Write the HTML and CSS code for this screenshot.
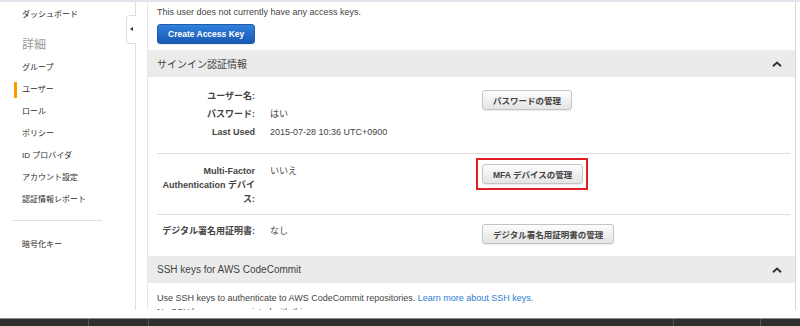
FILE: index.html
```html
<!DOCTYPE html>
<html lang="ja">
<head>
    <meta charset="UTF-8">
    <title>IAM ユーザー</title>
    <link rel="stylesheet" href="styles.css">
</head>
<body>

    <div class="window">
        <!-- Left navigation -->
        <nav class="sidebar">
            <a class="nav-item">ダッシュボード</a>
            <div class="nav-heading">詳細</div>
            <a class="nav-item">グループ</a>
            <a class="nav-item active">ユーザー</a>
            <a class="nav-item">ロール</a>
            <a class="nav-item">ポリシー</a>
            <a class="nav-item">ID プロバイダ</a>
            <a class="nav-item">アカウント設定</a>
            <a class="nav-item">認証情報レポート</a>
            <hr class="nav-divider">
            <a class="nav-item">暗号化キー</a>

            <div class="sidebar-toggle"><span class="toggle-arrow"></span></div>
        </nav>

        <main class="content">
            <div class="access-keys">
                <p>This user does not currently have any access keys.</p>
                <button class="btn btn-primary">Create Access Key</button>
            </div>

            <section class="panel">
                <div class="panel-header">
                    <span>サインイン認証情報</span>
                    <svg class="chevron" width="10" height="6" viewBox="0 0 10 6"><polyline points="1,5.2 5,1.5 9,5.2" fill="none" stroke="#333" stroke-width="2"/></svg>
                </div>
                <div class="panel-body">
                    <div class="cred-group">
                        <div class="cred-label">ユーザー名:</div>
                        <div class="cred-value"></div>
                        <div class="cred-action first"><button class="btn">パスワードの管理</button></div>
                        <div class="cred-label">パスワード:</div>
                        <div class="cred-value">はい</div>
                        <div class="cred-label">Last Used</div>
                        <div class="cred-value">2015-07-28 10:36 UTC+0900</div>
                    </div>

                    <div class="cred-group mfa">
                        <div class="cred-label">Multi-Factor Authentication デバイス:</div>
                        <div class="cred-value">いいえ</div>
                        <div class="cred-action">
                            <span class="highlight-box"><button class="btn">MFA デバイスの管理</button></span>
                        </div>
                    </div>

                    <div class="cred-group last">
                        <div class="cred-label">デジタル署名用証明書:</div>
                        <div class="cred-value">なし</div>
                        <div class="cred-action"><button class="btn">デジタル署名用証明書の管理</button></div>
                    </div>
                </div>
            </section>

            <section class="panel">
                <div class="panel-header">
                    <span>SSH keys for AWS CodeCommit</span>
                    <svg class="chevron" width="10" height="6" viewBox="0 0 10 6"><polyline points="1,5.2 5,1.5 9,5.2" fill="none" stroke="#333" stroke-width="2"/></svg>
                </div>
                <div class="ssh-body">
                    <p>Use SSH keys to authenticate to AWS CodeCommit repositories. <a href="#">Learn more about SSH keys.</a></p>
                    <p>No SSH keys are associated with this user.</p>
                </div>
            </section>
        </main>
    </div>

    <!-- taskbar strip at the bottom of the capture -->
    <div class="taskbar">
        <span style="width: 88px"></span>
        <span style="width: 59px"></span>
        <span style="width: 524px"></span>
        <span style="width: 86px"></span>
    </div>

</body>
</html>
```

FILE: styles.css
```css
body {
    margin: 0;
    font-family: "Liberation Sans", "Noto Sans CJK JP", sans-serif;
    font-size: 9px;
    color: #444;
    background-color: #fff;
    border-top: 2px solid #e2e6ec;
}
.window {
    display: flex;
    height: 308px;
    margin-bottom: 8px;
    overflow: hidden;
}

/* sidebar */
.sidebar {
    position: relative;
    display: flex;
    flex-direction: column;
    align-items: flex-start;
    width: 135px;
    flex-shrink: 0;
    padding-top: 2px;
    border-right: 1px solid #ddd;
}
.nav-item {
    display: block;
    margin: 3px 0 3px 14px;
    padding-left: 5px;
    border-left: 3px solid transparent;
    line-height: 16px;
    font-size: 8px;
    color: #2b2b2b;
    cursor: pointer;
}
.nav-item.active {
    border-left-color: #f90;
}
.nav-heading {
    margin: 7px 0 0 22px;
    line-height: 24px;
    font-size: 12px;
    color: #999;
}
.nav-divider {
    align-self: stretch;
    margin: 9px 33px 13px 13px;
    border: none;
    border-top: 1px solid #e2e2e2;
}
.sidebar-toggle {
    position: absolute;
    top: 13px;
    right: -1px;
    width: 9px;
    height: 27px;
    background-color: #fff;
    border: 1px solid #ddd;
    border-right: none;
    border-radius: 4px 0 0 4px;
}
.toggle-arrow {
    position: absolute;
    top: 11px;
    left: 3px;
    border-top: 2.5px solid transparent;
    border-bottom: 2.5px solid transparent;
    border-right: 3px solid #333;
}

/* main content */
.content {
    flex: 1;
    margin-left: 11px;
    margin-right: 4px;
    border-left: 1px solid #e8e8e8;
    border-right: 1px solid #d6d6d6;
}
.access-keys {
    padding: 3px 9px 6px;
}
.access-keys p {
    margin: 0 0 5px;
    line-height: 14px;
}
.btn {
    height: 20px;
    padding: 0 10px;
    font-family: inherit;
    font-size: 8.5px;
    font-weight: bold;
    color: #444;
    border: 1px solid #c4c4c4;
    border-radius: 3px;
    background: linear-gradient(#fdfdfd, #e4e4e4);
    box-shadow: 0 1px 1px rgba(0, 0, 0, 0.08);
    cursor: pointer;
    vertical-align: top;
}
.btn-primary {
    color: #fff;
    border-color: #1c5cab;
    background: linear-gradient(#3181dd, #1859b2);
}
.highlight-box {
    display: inline-block;
    margin: -6px;
    padding: 4px 3px 4px 4px;
    border: 2px solid #e41e26;
}

.panel-header {
    display: flex;
    align-items: center;
    justify-content: space-between;
    height: 27px;
    padding: 0 13px 0 9px;
    background-color: #ebebeb;
    font-size: 10px;
    color: #444;
}
.panel-body {
    padding: 0 5px 0 9px;
}
.cred-group {
    display: grid;
    grid-template-columns: 98px 197px auto;
    column-gap: 15px;
    row-gap: 4px;
    align-items: start;
    padding: 12px 0 14px;
    line-height: 14px;
}
.cred-group.mfa {
    padding: 10px 0 8px;
    border-top: 1px solid #ddd;
}
.cred-group.last {
    padding: 9px 0 12px;
    border-top: 1px solid #ddd;
}
.cred-label {
    font-weight: bold;
    text-align: right;
}
.cred-action {
    grid-column: 3;
    grid-row: 1;
    line-height: 0;
}
.cred-action.first {
    grid-row: 1 / span 3;
    margin-top: 1px;
}

.ssh-body {
    padding: 8px 9px 0;
}
.ssh-body p {
    margin: 0;
    line-height: 14px;
}
.ssh-body a {
    color: #2d7dd2;
    text-decoration: none;
}

/* bottom strip */
.taskbar {
    display: flex;
    height: 7px;
    background-color: #2e2e2e;
    border-top: 1px solid #8a8a8a;
}
.taskbar span {
    border-right: 1px solid #555;
}
```
